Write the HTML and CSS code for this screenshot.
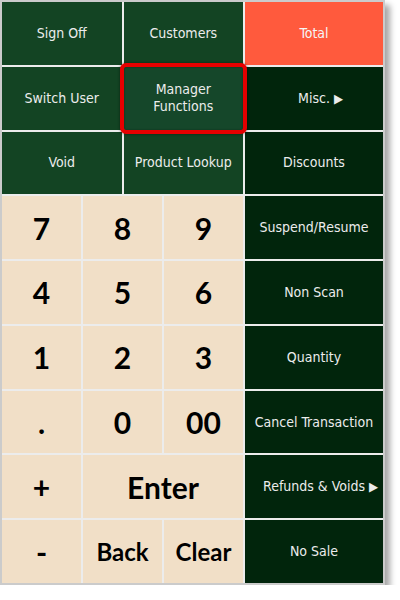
FILE: index.html
```html
<!DOCTYPE html>
<html>
<head>
<meta charset="utf-8">
<link rel="stylesheet" href="styles.css">
</head>
<body>
<div class="pad">
  <div class="btn green top">Sign Off</div>
  <div class="btn green top">Customers</div>
  <div class="btn total">Total</div>

  <div class="btn green top">Switch User</div>
  <div class="btn green top highlight">Manager<br>Functions</div>
  <div class="btn dark"><span class="more">Misc.</span></div>

  <div class="btn green top">Void</div>
  <div class="btn green top">Product Lookup</div>
  <div class="btn dark">Discounts</div>

  <div class="key">7</div>
  <div class="key">8</div>
  <div class="key">9</div>
  <div class="btn dark">Suspend/Resume</div>

  <div class="key">4</div>
  <div class="key">5</div>
  <div class="key">6</div>
  <div class="btn dark">Non Scan</div>

  <div class="key">1</div>
  <div class="key">2</div>
  <div class="key">3</div>
  <div class="btn dark">Quantity</div>

  <div class="key">.</div>
  <div class="key">0</div>
  <div class="key">00</div>
  <div class="btn dark">Cancel Transaction</div>

  <div class="key">+</div>
  <div class="key wide">Enter</div>
  <div class="btn dark"><span class="more">Refunds &amp; Voids</span></div>

  <div class="key">-</div>
  <div class="key small">Back</div>
  <div class="key small">Clear</div>
  <div class="btn dark">No Sale</div>
</div>
</body>
</html>
```

FILE: styles.css
```css
html, body {
  margin: 0;
  padding: 0;
  background: #ffffff;
}

.pad {
  width: 381px;
  height: 581px;
  border: 2px solid #cbcbcb;
  background: #ececec;
  display: grid;
  grid-template-columns: repeat(6, 1fr) 138px;
  grid-template-rows: repeat(9, 1fr);
  gap: 2px;
  box-shadow: 5px 5px 6px rgba(0, 0, 0, 0.35);
}

.btn {
  display: flex;
  align-items: center;
  justify-content: center;
  text-align: center;
  font-family: "DejaVu Sans", sans-serif;
  font-stretch: condensed;
  font-size: 14px;
  line-height: 17px;
  color: #ececec;
}

.top {
  grid-column: span 3;
}

.green {
  background: #134423;
}

.dark {
  background: #01250c;
}

.total {
  background: #ff5a3d;
  color: #f6f6f6;
}

.highlight {
  position: relative;
  background: #15472a;
}

.highlight::after {
  content: "";
  position: absolute;
  top: -4px;
  left: -4px;
  right: -4px;
  bottom: -4px;
  border: 4px solid #e60000;
  border-radius: 6px;
  box-shadow: 0 0 3px rgba(0, 0, 0, 0.5), inset 0 0 2px rgba(0, 0, 0, 0.4);
  z-index: 1;
}

.more {
  position: relative;
}

.more::after {
  content: "\25B6";
  position: absolute;
  left: 100%;
  top: 0;
  margin-left: 4px;
  font-size: 13px;
}

.key {
  grid-column: span 2;
  display: flex;
  align-items: center;
  justify-content: center;
  background: #f1dfc7;
  color: #000000;
  font-family: Lato, "Open Sans", sans-serif;
  font-weight: 700;
  font-size: 30px;
}

.wide {
  grid-column: span 4;
}

.small {
  font-size: 24px;
}
```
